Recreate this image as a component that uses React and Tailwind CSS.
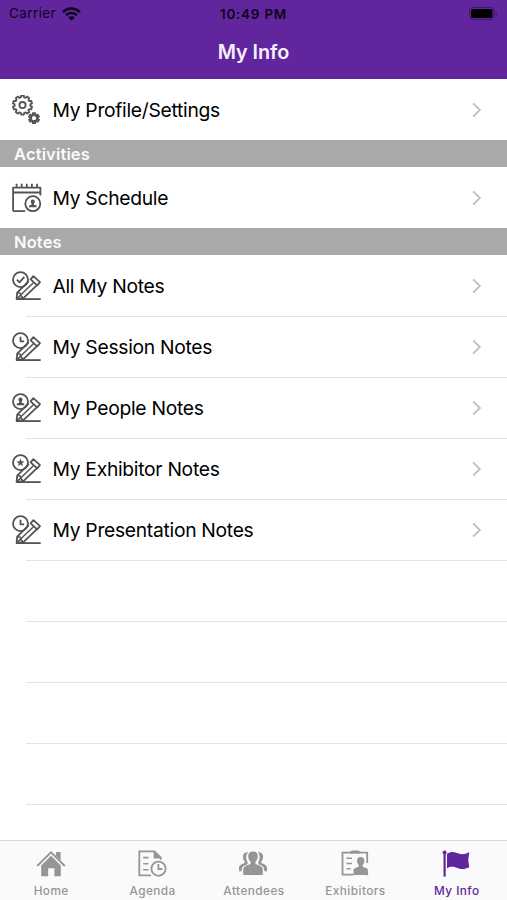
import React from 'react';

// Builds the outline of a cog wheel
const gearPath = (cx, cy, outer, inner, teeth) => {
    const points = [];
    const step = (Math.PI * 2) / teeth;
    for (let i = 0; i < teeth; i++) {
        const a = i * step - Math.PI / 2;
        [[-0.34, inner], [-0.22, outer], [0.22, outer], [0.34, inner]].forEach(([t, r]) => {
            points.push(`${(cx + r * Math.cos(a + t * step)).toFixed(2)} ${(cy + r * Math.sin(a + t * step)).toFixed(2)}`);
        });
    }
    return `M${points.join('L')}Z`;
};

const RowIcon = ({ children }) => (
    <svg className="w-[30px] h-[29px] shrink-0 text-[#535353]" viewBox="0 0 30 29" fill="none" stroke="currentColor" strokeWidth="1.8" strokeLinejoin="round">
        {children}
    </svg>
);

const GearsIcon = () => (
    <RowIcon>
        <path d={gearPath(10.5, 10.1, 9.7, 7.9, 10)} />
        <circle cx="10.5" cy="10.1" r="3.1" />
        <path d={gearPath(22, 23.2, 5.2, 3.4, 6)} />
        <circle cx="22" cy="23.2" r="3" strokeWidth="1.8" />
    </RowIcon>
);

const PersonGlyph = () => (
    <path d="M0-4.1C1.5-4.1 2.1-3 2-1.8C1.9-.8 1.3-.2 1.1.4L1.3 1.1L3.6 1.9L3.9 3.6H-3.9L-3.6 1.9L-1.3 1.1L-1.1.4C-1.3-.2-1.9-.8-2-1.8C-2.1-3-1.5-4.1 0-4.1Z" fill="currentColor" stroke="none" />
);

const CalendarIcon = () => (
    <RowIcon>
        <path d="M1.1 28.1V4.7H28.4V9.5H1.1M1.1 28.1H13.2M28.4 9.5V12.5" />
        <path d="M4.6.8V4.7M9.7.8V4.7M14.8.8V4.7M19.9.8V4.7M25 .8V4.7" />
        <circle cx="20.8" cy="20.7" r="7.5" />
        <g transform="translate(20.8 20.6)">
            <PersonGlyph />
        </g>
    </RowIcon>
);

const badges = {
    check: <path d="M-3.6 0L-1 2.7L3.8-2.7" />,
    clock: <path d="M0-3.8V.7H3.6" />,
    person: <PersonGlyph />,
    star: <path d="M0-4L1.1-1.4L3.9-1.2L1.8.6L2.5 3.4L0 1.9L-2.5 3.4L-1.8.6L-3.9-1.2L-1.1-1.4Z" fill="currentColor" stroke="none" />,
};

const NoteIcon = ({ badge }) => (
    <RowIcon>
        <circle cx="8.5" cy="8.6" r="7.5" />
        <g transform="translate(8.5 8.6)">{badges[badge]}</g>
        <path d="M21.4 5.2L28 11.2L25.2 14.4L18.6 8.4Z" />
        <path d="M16.8 10.2L5.2 21.6L4.6 28L11.4 27.2L25 14.2" />
        <path d="M21.4 11.8L8.4 24.3M5.2 21.6L8.2 22.2L8.8 24.6L11.4 27.2M4.8 27.9L8.4 24.3" strokeWidth="1.5" />
        <path d="M4.8 28.1H28.7" />
    </RowIcon>
);

const TabIcon = ({ children }) => (
    <svg className="w-[30px] h-[28px]" viewBox="0 0 30 28" fill="none" stroke="currentColor" strokeWidth="1.8">
        {children}
    </svg>
);

const HomeIcon = () => (
    <TabIcon>
        <path d="M1.2 16L15 2.3L28.8 16" />
        <path d="M5.2 15.5L15 5.8L24.8 15.5V26.3H18.4V18.2H12.2V26.3H5.2Z" fill="currentColor" stroke="none" />
        <path d="M19.9 2H24.6V10.4L19.9 5.7Z" fill="currentColor" stroke="none" />
    </TabIcon>
);

const AgendaIcon = () => (
    <TabIcon>
        <path d="M14 25.4H2.3V1.3H17.4L23.8 7.7V9.7" />
        <path d="M16.6 1V8.5H24.2Z" fill="currentColor" stroke="none" />
        <path d="M6.2 7.6H11.5M6.2 13.7H11.5M6.2 19.8H11.5" strokeWidth="1.6" />
        <circle cx="21.5" cy="18.7" r="7.1" />
        <path d="M21.4 14V19H25.4" />
    </TabIcon>
);

const AttendeesIcon = () => (
    <TabIcon>
        <path d="M15 1.4C18.6 1.4 20.2 3.8 19.7 7.4C19.4 9.3 18.4 10.6 17.5 11.6V14.1C20 15.4 24.5 15.7 24.8 19.8V25H5.2V19.8C5.5 15.7 10 15.4 12.5 14.1V11.6C11.6 10.6 10.6 9.3 10.3 7.4C9.8 3.8 11.4 1.4 15 1.4Z" fill="currentColor" stroke="none" />
        <g fill="currentColor" stroke="none">
            <path d="M10.1 2.3C8.2 2 5.6 2.6 5 5.4C4.7 7.8 5.2 10 6.6 11.3V13.1C4 14.4 1.3 14.6 1 18V21.3H3.7C3.7 18 4 16.1 9.6 14.2V11.8C7.9 9.5 7.6 5.2 10.1 2.3Z" />
            <path d="M19.9 2.3C21.8 2 24.4 2.6 25 5.4C25.3 7.8 24.8 10 23.4 11.3V13.1C26 14.4 28.7 14.6 29 18V21.3H26.3C26.3 18 26 16.1 20.4 14.2V11.8C22.1 9.5 22.4 5.2 19.9 2.3Z" />
        </g>
    </TabIcon>
);

const ExhibitorsIcon = () => (
    <TabIcon>
        <path d="M13.5 24.7H2.5V2.6H27.2V13M27.2 22V25.3" />
        <path d="M10 3.5V1.7L12 .6H18.2L20.2 1.7V3.5Z" fill="currentColor" stroke="none" />
        <path d="M6.4 8.2H12M6.4 13.5H12M6.4 18.8H10.6" strokeWidth="1.6" />
        <path d="M20.7 7.1C23.4 7.1 24.7 9.1 24.3 11.7C24 13.3 23.2 14.2 22.7 14.9V16.7L26.7 18.3C27.8 18.9 27.9 19.8 27.9 21V24.9H13.5V21C13.5 19.8 13.6 18.9 14.7 18.3L18.7 16.7V14.9C18.2 14.2 17.4 13.3 17.1 11.7C16.7 9.1 18 7.1 20.7 7.1Z" fill="currentColor" stroke="none" />
    </TabIcon>
);

const FlagIcon = () => (
    <TabIcon>
        <circle cx="3.6" cy="2.6" r="2" fill="currentColor" stroke="none" />
        <path d="M3.6 3V26.6" strokeWidth="2.2" />
        <path d="M6 3.8C11 .4 14.4 2.5 17.5 3.5C21.2 4.7 24 4.2 28.3 2.2L27.2 10L28.3 17.3C24 19.4 20.8 19.6 17.2 18.2C13.7 16.9 10.3 15.7 6 18.4Z" fill="currentColor" stroke="none" />
    </TabIcon>
);

const notes = [
    { label: 'All My Notes', badge: 'check' },
    { label: 'My Session Notes', badge: 'clock' },
    { label: 'My People Notes', badge: 'person' },
    { label: 'My Exhibitor Notes', badge: 'star' },
    { label: 'My Presentation Notes', badge: 'clock' },
];

const tabs = [
    { label: 'Home', icon: <HomeIcon /> },
    { label: 'Agenda', icon: <AgendaIcon /> },
    { label: 'Attendees', icon: <AttendeesIcon /> },
    { label: 'Exhibitors', icon: <ExhibitorsIcon /> },
    { label: 'My Info', icon: <FlagIcon />, active: true },
];

const Row = ({ icon, label }) => (
    <div className="flex h-[61px] items-center pl-3 pr-[25px]">
        {icon}
        <span className="ml-[10.5px] flex-1 text-[19.3px] leading-6 tracking-[-0.3px] text-black">{label}</span>
        <svg className="w-[10px] h-[16px] text-[#c2c2c5]" viewBox="0 0 10 16" fill="none" stroke="currentColor" strokeWidth="2">
            <path d="M1.2 1.4L7.8 8L1.2 14.6" />
        </svg>
    </div>
);

const Divider = () => <div className="-mb-px ml-[26px] h-px bg-[#e4e4e5]" />;

const SectionHeader = ({ title }) => (
    <div className="flex h-[27px] items-center bg-[#a9a9a9] pl-[14px] pt-px text-[16.5px] font-semibold tracking-[0.15px] text-[#fafafa]">{title}</div>
);

const StatusBar = () => (
    <div className="grid h-[27px] grid-cols-3 items-center px-[9px] text-[13.5px] text-[#0d0418]">
        <div className="flex items-center gap-[6px]">
            <span className="tracking-[0.4px]">Carrier</span>
            <svg className="w-[19px] h-[14px]" viewBox="0 0 19 14" fill="none" stroke="currentColor" strokeWidth="2.5">
                <path d="M1 5C5.8.4 13.2.4 18 5" />
                <path d="M4 8.2C7.2 5.2 11.8 5.2 15 8.2" />
                <path d="M6.2 10.5C8 8.9 11 8.9 12.8 10.5L9.5 13.8Z" fill="currentColor" stroke="none" />
            </svg>
        </div>
        <span className="pt-px text-center font-semibold tracking-[0.75px]">10:49 PM</span>
        <svg className="h-[13px] w-[29px] justify-self-end" viewBox="0 0 29 13">
            <rect x=".5" y=".5" width="24.5" height="12" rx="3" fill="none" stroke="#42166f" />
            <rect x="2" y="2" width="21.5" height="9" rx="1.5" fill="#000" />
            <path d="M26.5 4.5C28.5 5 28.5 8 26.5 8.5Z" fill="#42166f" />
        </svg>
    </div>
);

const App = () => (
    <div className="flex h-[900px] w-[507px] flex-col overflow-hidden bg-white font-['Inter','Liberation_Sans',sans-serif]">
        <header className="h-[79px] bg-[#61269e]">
            <StatusBar />
            <h1 className="mt-[10px] text-center text-[19.8px] font-semibold leading-[30px] tracking-[-0.05px] text-[#f7f0fc]">My Info</h1>
        </header>

        <main className="flex-1">
            <Row icon={<GearsIcon />} label="My Profile/Settings" />
            <SectionHeader title="Activities" />
            <Row icon={<CalendarIcon />} label="My Schedule" />
            <SectionHeader title="Notes" />
            {notes.map(note => (
                <div key={note.label}>
                    <Row icon={<NoteIcon badge={note.badge} />} label={note.label} />
                    <Divider />
                </div>
            ))}
            {/* Unused rows of the table */}
            {[1, 2, 3, 4].map(n => (
                <div key={n}>
                    <div className="h-[61px]" />
                    <Divider />
                </div>
            ))}
        </main>

        <nav className="grid h-[60px] grid-cols-5 border-t border-[#d9d9d9] bg-[#fafafa]">
            {tabs.map(tab => (
                <div key={tab.label} className={`flex flex-col items-center pt-[9px] ${tab.active ? 'text-[#61269e]' : 'text-[#959595]'}`}>
                    {tab.icon}
                    <span className="ml-px mt-[5px] text-[11.8px] font-medium leading-4 tracking-[0.45px]">{tab.label}</span>
                </div>
            ))}
        </nav>
    </div>
);

export default App;
